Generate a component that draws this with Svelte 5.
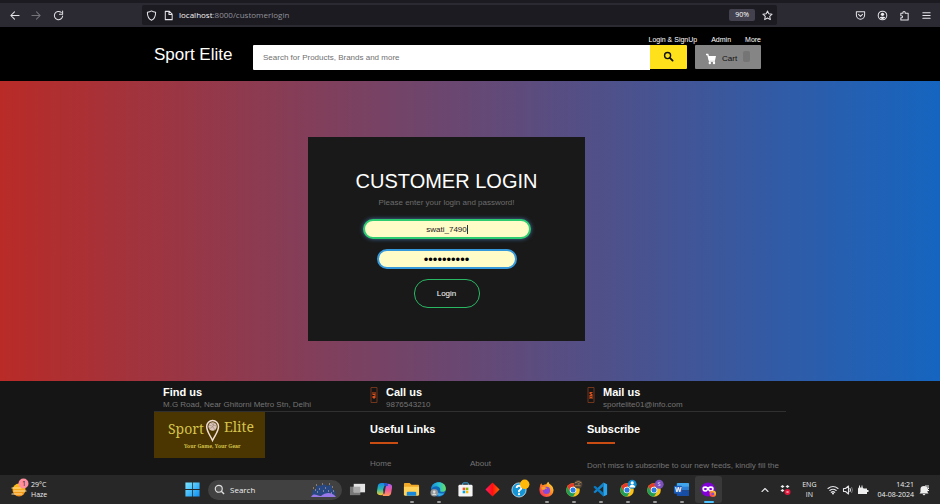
<script>
  let username = $state('swati_7490');
  let password = $state('sportelite');
  let query = $state('');

  const contacts = [
    { title: 'Find us', detail: 'M.G Road, Near Ghitorni Metro Stn, Delhi', glyph: '' },
    { title: 'Call us', detail: '9876543210', glyph: 'M2 5h1v2h1V5h1v4H4V8H2zM2 9h3v2H4v1H3v-1H2z' },
    { title: 'Mail us', detail: 'sportelite01@info.com', glyph: 'M2 5h3v1H4v1h1v2H2V8h1V7H2zM2 9h1v1h1V9h1v3H4v-1H3v1H2z' }
  ];

  const apps = [
    { id: 'tasks', label: 'Task view' },
    { id: 'copilot', label: 'Copilot' },
    { id: 'files', label: 'File Explorer', open: true },
    { id: 'edge', label: 'Edge', open: true },
    { id: 'store', label: 'Store' },
    { id: 'diamond', label: 'Git' },
    { id: 'help', label: 'Get Help' },
    { id: 'firefox', label: 'Firefox', open: true },
    { id: 'chrome', label: 'Chrome', badge: 'photo', open: true },
    { id: 'code', label: 'Visual Studio Code', open: true },
    { id: 'chrome', label: 'Chrome profile 2', badge: 'user', open: true },
    { id: 'chrome', label: 'Chrome profile S', badge: 's', open: true },
    { id: 'word', label: 'Word', open: true },
    { id: 'private', label: 'Firefox Private Browsing', active: true }
  ];
</script>

<svelte:head><title>Sport Elite</title></svelte:head>

<svg class="defs" aria-hidden="true">
  <defs>
    <linearGradient id="win" x2="1" y2="1"><stop stop-color="#7be6ff" /><stop offset="1" stop-color="#0f90f5" /></linearGradient>
    <linearGradient id="co1" x2="0" y2="1"><stop stop-color="#1686e8" /><stop offset=".5" stop-color="#27b8b0" /><stop offset="1" stop-color="#f7c92b" /></linearGradient>
    <linearGradient id="co2" x2="0" y2="1"><stop stop-color="#a55df2" /><stop offset=".5" stop-color="#f0599c" /><stop offset="1" stop-color="#ff9a54" /></linearGradient>
    <linearGradient id="edge1" x2="1" y2="0"><stop stop-color="#1689d8" /><stop offset=".55" stop-color="#2bc4d0" /><stop offset="1" stop-color="#6be058" /></linearGradient>
    <linearGradient id="dia" x2="1" y2="0"><stop stop-color="#ff1c68" /><stop offset=".5" stop-color="#ff1010" /><stop offset="1" stop-color="#ff6a00" /></linearGradient>
    <linearGradient id="fox" x1="1" x2="0" y2="1"><stop stop-color="#fff04a" /><stop offset=".45" stop-color="#ff8b1f" /><stop offset="1" stop-color="#f5156c" /></linearGradient>
    <linearGradient id="sun" x2="0" y2="1"><stop stop-color="#ffc21c" /><stop offset="1" stop-color="#f08a18" /></linearGradient>
  </defs>
</svg>

<div class="screen">
  <div class="browser">
    <div class="nav-tools">
      <button aria-label="Back"><svg viewBox="0 0 12 12"><path d="M11 6H2M6 2 2 6l4 4" class="line" /></svg></button>
      <button aria-label="Forward" class="dim"><svg viewBox="0 0 12 12"><path d="M1 6h9M6 2l4 4-4 4" class="line" /></svg></button>
      <button aria-label="Reload"><svg viewBox="0 0 12 12"><path d="M10.5 6.5A4.5 4.5 0 1 1 9 2.7M10.5 1v3.6H7" class="line" /></svg></button>
    </div>
    <div class="address">
      <svg viewBox="0 0 12 12"><path d="M6 1c1.5 1 3 1.3 4.5 1.4C10.5 7 9.500 9.500 6 11.200 2.500 9.500 1.500 7 1.500 2.400 3 2.300 4.500 2 6 1z" class="line" /></svg>
      <svg viewBox="0 0 12 12" class="doc"><path d="M2.500 1.500h4.500l3 3v6h-7.500zM6.500 1.500v3.300H10" class="line" /></svg>
      <span class="url"><b>localhost</b>:8000/customerlogin</span>
      <span class="zoom">90%</span>
      <button aria-label="Bookmark"><svg viewBox="0 0 12 12"><path d="m6 1 1.500 3.200 3.500.4-2.600 2.400.7 3.500L6 8.800l-3.100 1.700.7-3.500L1 4.600l3.500-.4z" class="line" /></svg></button>
    </div>
    <div class="extras">
      <button aria-label="Pocket"><svg viewBox="0 0 12 12"><path d="M1.500 2h9v3.500a4.500 4.500 0 0 1-9 0zM3.800 4.800 6 7l2.200-2.200" class="line" /></svg></button>
      <button aria-label="Account"><svg viewBox="0 0 12 12"><circle cx="6" cy="6" r="4.700" class="line" /><circle cx="6" cy="4.700" r="1.800" fill="#eee" /><path d="M3 8.500C3 7 9 7 9 8.500L6 10z" fill="#eee" /></svg></button>
      <button aria-label="Extensions"><svg viewBox="0 0 12 12"><path d="M2 3.500h2.300C3.800 1 7.200 1 6.700 3.500H10V11H2V8.500c2.500.5 2.500-2.700 0-2.200z" class="line" /></svg></button>
      <button aria-label="Menu"><svg viewBox="0 0 12 12"><path d="M2 3h8M2 6h8M2 9h8" class="line" /></svg></button>
    </div>
  </div>

  <header>
    <div class="container head">
      <a href="#home" class="brand">Sport Elite</a>
      <div class="head-main">
        <nav><a href="#login">Login &amp; SignUp</a><a href="#admin">Admin</a><a href="#more">More</a></nav>
        <div class="tools">
          <form class="search" onsubmit={(e) => e.preventDefault()}>
            <input type="text" aria-label="Search" placeholder="Search for Products, Brands and more" bind:value={query} />
            <button aria-label="Search products"><svg viewBox="0 0 12 12"><circle cx="5" cy="5" r="3.300" fill="none" stroke="#111" stroke-width="1.500" /><path d="m7.500 7.500 3 3" stroke="#111" stroke-width="2" stroke-linecap="round" /></svg></button>
          </form>
          <button class="cart">
            <svg viewBox="0 0 12 12"><path d="M1 1.500h1.800L4.500 8H10" fill="none" stroke="#fff" stroke-width="1.300" /><path d="M3 3h8l-1 4.500H4z" fill="#fff" /><circle cx="4.800" cy="10" r="1.200" fill="#fff" /><circle cx="9" cy="10" r="1.200" fill="#fff" /></svg>
            Cart <span></span>
          </button>
        </div>
      </div>
    </div>
  </header>

  <main>
    <div class="container">
      <form class="card" onsubmit={(e) => e.preventDefault()}>
        <h1>CUSTOMER LOGIN</h1>
        <p>Please enter your login and password!</p>
        <div class="field">
          <input class="user" type="text" aria-label="Username" bind:value={username} />
          <span class="caret"></span>
        </div>
        <input class="pass" type="password" aria-label="Password" bind:value={password} />
        <button>Login</button>
      </form>
    </div>
  </main>

  <footer>
    <div class="container">
      <div class="columns contacts">
        {#each contacts as c}
          <div class="contact">
            {#if c.glyph}
              <svg viewBox="0 0 7 16" aria-hidden="true"><path d="M.5.5h6v15h-6z" fill="none" stroke="#71351c" /><path d={c.glyph} fill="#d9501b" /></svg>
            {/if}
            <div><h2>{c.title}</h2><span>{c.detail}</span></div>
          </div>
        {/each}
      </div>
      <div class="columns">
        <div>
          <a href="#home" class="logo" aria-label="Sport Elite home">
            <svg viewBox="0 0 111 46">
              <text x="14" y="22" font-size="14">Sport</text>
              <text x="70" y="20" font-size="14">Elite</text>
              <text x="30" y="36" font-size="5" font-weight="bold">Your Game, Your Gear</text>
              <path d="M58.500 28.500C56 23 52.700 19.500 52.700 14.500a5.900 5.900 0 0 1 11.800 0c0 5-3.500 8.500-6 14z" fill="#4b3500" stroke="#f1dfd3" stroke-width="1.500" />
              <circle cx="58.600" cy="14.500" r="4.200" fill="#dcc7ba" />
              <path d="M55 13q4 0 6 5M57 10.500q1 3 5.500 3.500M55 16q4 1 5-5" fill="none" stroke="#8d7466" stroke-width=".5" />
            </svg>
          </a>
        </div>
        <div class="widget">
          <h2>Useful Links</h2>
          <div class="links"><a href="#home">Home</a><a href="#about">About</a></div>
        </div>
        <div class="widget">
          <h2>Subscribe</h2>
          <p>Don't miss to subscribe to our new feeds, kindly fill the</p>
        </div>
      </div>
    </div>
  </footer>

  <div class="taskbar">
    <div class="weather">
      <svg viewBox="0 0 18 20"><circle cx="8" cy="12" r="6.500" fill="url(#sun)" /><path d="M1 10h9M3 13h12M1 16h10" stroke="#ffe2a0" stroke-width="1.200" stroke-linecap="round" /><circle cx="12.500" cy="5.500" r="5" fill="#ff8f9f" /><text x="11" y="8" font-size="7" fill="#222">1</text></svg>
      <div>29°C<span>Haze</span></div>
    </div>
    <button class="app" aria-label="Start"><svg viewBox="0 0 18 18"><path d="M1.500 1.500h7.100v7.100H1.500zM9.400 1.500h7.100v7.100H9.400zM1.500 9.400h7.100v7.100H1.500zM9.400 9.400h7.100v7.100H9.400z" fill="url(#win)" /></svg></button>
    <button class="find">
      <svg class="lens" viewBox="0 0 12 12"><circle cx="5.200" cy="5.200" r="3.800" fill="#555" stroke="#ddd" stroke-width="1.300" /><path d="m8 8 3 3" stroke="#ddd" stroke-width="1.500" /></svg>
      Search
      <svg class="scene" viewBox="0 0 25 16"><path d="M1 13 2 8l3-1 1-4 4 1 3-2 3 2 4-1 1 4 3 2v5z" fill="#244a91" opacity=".85" /><path d="M0 15c3-5 6-1 10-1 4-3 10-5 15 1z" fill="#9678e8" /><path d="M2 6h1M5 3h1M8 7h1M11 2h1M14 6h1M18 2h1M21 5h1M6 10h1M12 9h1M17 9h1M22 9h1M4 8h1M20 11h1" stroke="#d8b6a5" /></svg>
    </button>
    {#each apps as app}
      <button class="app" class:active={app.active} class:open={app.open} aria-label={app.label}>
        <svg viewBox="0 0 18 18">
          {#if app.id === 'tasks'}
            <path d="M1 6h11v9H1z" fill="#777" /><path d="M5 3h12v9H5z" fill="#e4e4e4" /><path d="M5 6h7v6H5z" fill="#aaa" />
          {:else if app.id === 'copilot'}
            <path d="M6 2h5L8 13q-.5 2-2.500 2-5 0-4.500-4l1-6q.6-3 4-3z" fill="url(#co1)" /><path d="M12 16H7l3-11q.5-2 2.500-2 5 0 4.500 4l-1 6q-.6 3-4 3z" fill="url(#co2)" /><path d="M8 2h3q1.500 0 2 3-2.500-.5-3 1.500z" fill="#2358c8" /><path d="m7.500 9 1.500-4h1.500L9 13.500H8z" fill="#303044" />
          {:else if app.id === 'files'}
            <path d="M1 3q0-1 1-1h5l2 2h7q1 0 1 1v10H1z" fill="#f0a928" /><path d="M1 6h16v8q0 1.500-1.500 1.500h-13Q1 15.500 1 14z" fill="#ffd35b" /><path d="M4 15.500v-3q0-1 1-1h8q1 0 1 1v3z" fill="#1687d9" />
          {:else if app.id === 'edge'}
            <circle cx="9" cy="9" r="7.800" fill="#1268b8" /><path d="M1.200 9C1-.5 16.800-1.500 16.800 8.500q0 3-4 3-2.500 0-2-2Q11 6 7 5.500 3 5.500 1.200 9z" fill="url(#edge1)" /><path d="M7 9q0 5 8 4-2 3-5 3-5-1-3-7z" fill="#35acea" /><circle cx="4.500" cy="12.500" r="4" fill="#8f9499" /><circle cx="4.500" cy="11.500" r="1.400" fill="#ddd" /><path d="M2 14.700q2.500-3 5 0z" fill="#ddd" />
          {:else if app.id === 'store'}
            <path d="M6 5V3q0-1 1-1h4q1 0 1 1v2" fill="none" stroke="#3ab5ef" /><rect x="1.500" y="4" width="15" height="12.500" rx="1.500" fill="#f4f4f4" /><path d="M6 7h2.700v2.700H6z" fill="#f25022" /><path d="M9.300 7H12v2.700H9.300z" fill="#7fba00" /><path d="M6 10.300h2.700V13H6z" fill="#00a4ef" /><path d="M9.300 10.300H12V13H9.300z" fill="#ffb900" />
          {:else if app.id === 'diamond'}
            <path d="m9 1.500 7.500 7.500-7.500 7.500L1.500 9z" fill="url(#dia)" />
          {:else if app.id === 'help'}
            <circle cx="8.500" cy="9.500" r="7.500" fill="#1595d5" stroke="#d6eef9" stroke-width=".8" /><path d="M6 7.500Q6 5 8.500 5T11 7.500q0 1.500-2.500 2.800V12" fill="none" stroke="#fff" stroke-width="2" /><circle cx="8.500" cy="14" r="1.200" fill="#fff" /><circle cx="14.500" cy="3.500" r="5" fill="#ffba09" />
          {:else if app.id === 'firefox'}
            <path d="M2 6q0-2 1.500-3.500.5 1.500 1.500 2 2-1 4-1Q9 2 11 .8q.5 2.200 3 3.700 2.500 2 2.500 5a7.300 7.300 0 0 1-15 0q0-2 .5-3.500z" fill="url(#fox)" /><circle cx="9" cy="10" r="3.800" fill="#8848d8" /><path d="M3.500 6.500Q7 5.500 10 8 7 8 6.500 9.500L4 9z" fill="#ff9e27" />
          {:else if app.id === 'chrome'}
            <circle cx="8.500" cy="9.500" r="7.200" fill="#fbc116" /><path d="M2.300 5.900a7.200 7.200 0 0 1 12.500 0H8.500L5.400 11.300z" fill="#e33b2e" /><path d="M2.300 5.900a7.200 7.200 0 0 0 6.200 10.800l3.100-5.400H5.400z" fill="#229d54" /><circle cx="8.500" cy="9.500" r="3.500" fill="#fff" /><circle cx="8.500" cy="9.500" r="2.700" fill="#287de8" />
            {#if app.badge === 'photo'}
              <circle cx="14" cy="3.500" r="4.500" fill="#4a4037" /><path d="M10.500 2q4-3 7 0M10.500 5h6" stroke="#ad8858" fill="none" /><circle cx="14.500" cy="3" r="1.200" fill="#806b52" />
            {:else if app.badge === 'user'}
              <circle cx="14" cy="3.500" r="4.700" fill="#118cd0" /><circle cx="14" cy="2" r="1.700" fill="#fff" /><path d="M11 7q0-3 3-3t3 3z" fill="#fff" />
            {:else}
              <circle cx="14" cy="3.500" r="4.700" fill="#7950bd" /><text x="12.300" y="5.800" font-size="6" fill="#e9ddff">S</text>
            {/if}
          {:else if app.id === 'code'}
            <path d="m12 1.500 4 2v11l-4 2z" fill="#28a5ef" /><path d="M12 1.500v4L4.500 12 3 13l-1.500-1.300L3 10z" fill="#1284cc" /><path d="M12 16.500v-4L4.500 6 3 5 1.500 6.300 3 8z" fill="#087bc4" />
          {:else if app.id === 'word'}
            <path d="M5 2h11q1 0 1 1v4H4V3q0-1 1-1z" fill="#41a5ee" /><path d="M4 6h13v4H4z" fill="#2b7cd3" /><path d="M4 10h13v5q0 1-1 1H5q-1 0-1-1z" fill="#174da5" /><rect x="1" y="5" width="8.500" height="8.500" rx="1" fill="#1959b7" /><text x="2" y="11.500" font-size="7" font-weight="bold" fill="#fff">W</text>
          {:else}
            <circle cx="8.500" cy="9" r="7.500" fill="#8000d7" /><path d="M2.500 8q0-2.500 3-2.500 2 0 3 1 1-1 3-1 3 0 3 2.500 0 3.500-3 3.500-2 0-3-2-1 2-3 2-3 0-3-3.500z" fill="#fff" /><ellipse cx="5.700" cy="8.600" rx="1.600" ry="1.100" fill="#8000d7" /><ellipse cx="11.300" cy="8.600" rx="1.600" ry="1.100" fill="#8000d7" /><circle cx="13.500" cy="13.500" r="3.500" fill="url(#fox)" /><circle cx="13.500" cy="13.700" r="1.500" fill="#8848d8" />
          {/if}
        </svg>
      </button>
    {/each}
    <div class="tray">
      <svg viewBox="0 0 12 12"><path d="m3 7.500 3-3 3 3" class="line" /></svg>
      <svg viewBox="0 0 12 12" class="dots"><path d="m3.500 1 2 1.500-2 1.500-2-1.500zM8.500 1l2 1.500-2 1.500-2-1.500zM3.500 5l2 1.500-2 1.500-2-1.500z" fill="#eee" /><circle cx="8.500" cy="8" r="3" fill="#e3163c" /><path d="m7.500 7 2 2m0-2-2 2" stroke="#fff" stroke-width=".6" /></svg>
      <div class="lang">ENG<span>IN</span></div>
      <svg viewBox="0 0 12 12" class="wifi"><path d="M1 4.500q5-4 10 0M2.800 6.500q3.200-2.600 6.400 0M4.300 8.300q1.700-1.300 3.400 0" class="line" /><circle cx="6" cy="9.500" r="1" fill="#eee" /></svg>
      <svg viewBox="0 0 12 12"><path d="M1.500 4.500h2L6.500 2v8L3.500 7.500h-2zM8 4.500q1 1.500 0 3" class="line" /><path d="M9.500 3q2 3 0 6" stroke="#777" fill="none" /></svg>
      <svg viewBox="0 0 12 12"><path d="M1 4.500h9v1.500h1.500v2H10V10H1z" fill="#eee" /><path d="M2.500 1.500v2.500M5 1.500v2.500M1.500 4h4.500q0 3-2.300 3Z" stroke="#eee" fill="#eee" /></svg>
      <div class="clock">14:21<span>04-08-2024</span></div>
      <svg viewBox="0 0 12 12"><path d="M2.500 8V5q0-3 3.500-3t3.500 3v3l1 1.500h-9zM4.500 10h3L6 11.500z" fill="#eee" /><path d="M7 2h4M8 4h3L8.500 6.500H11" stroke="#eee" stroke-width="1" fill="none" /></svg>
    </div>
  </div>
</div>

<style>
  :global(body) { margin: 0; background: #151515; }
  * { box-sizing: border-box; }
  .screen { height: 100vh; display: flex; flex-direction: column; overflow: hidden; font-family: "Liberation Sans", Arial, sans-serif; font-size: 8px; line-height: 12px; color: #fff; }
  .defs { position: absolute; width: 0; height: 0; }
  button, input { font: inherit; color: inherit; margin: 0; padding: 0; border: 0; background: none; }
  a { color: inherit; text-decoration: none; }
  h1, h2, p { margin: 0; }
  svg { display: block; flex: none; width: 12px; height: 12px; }
  .line { fill: none; stroke: #e4e4e8; stroke-width: 1.100; stroke-linecap: round; stroke-linejoin: round; }
  .container { width: 100%; max-width: 632px; margin: 0 auto; }

  .browser { flex: none; height: 27px; display: flex; align-items: center; padding: 0 8px 0 9px; border-top: 3px solid #1c1b22; background: #2b2a33; font-family: "Open Sans", "Noto Sans", sans-serif; }
  .browser svg { width: 11px; height: 11px; }
  .nav-tools { display: flex; gap: 11px; width: 133px; }
  .dim { opacity: .4; }
  .address { flex: 0 1 635px; height: 20px; margin-right: auto; padding: 0 4px; display: flex; align-items: center; border-radius: 2px; background: #1c1b22; }
  .address .doc { margin: 0 5px 0 6px; }
  .url { color: #93929a; }
  .url b { font-weight: 400; color: #f4f4f6; }
  .zoom { margin: 0 7px 0 auto; padding: 0 6px; border-radius: 2px; background: #42414d; font-size: 7px; }
  .extras { display: flex; gap: 11px; }

  header { flex: none; background: #000; padding: 7px 0 11px; }
  .head { display: flex; }
  .brand { flex: none; width: 99px; padding-top: 11px; font-size: 17px; line-height: 20px; }
  .head-main { flex: 0 1 508px; }
  nav { display: flex; justify-content: flex-end; gap: 14px; font-size: 7px; line-height: 11px; }
  .tools { display: flex; gap: 8px; height: 25px; }
  .search { flex: 1; display: flex; }
  .search input { flex: 1; min-width: 0; padding: 0 10px; background: #fff; color: #222; border-radius: 1px 0 0 1px; outline: 0; }
  .search input::placeholder { color: #707070; opacity: 1; }
  .search button { width: 37px; height: 24px; display: grid; place-items: center; background: #ffe11b; border-radius: 0 1px 1px 0; }
  .search svg { width: 11px; height: 11px; margin-bottom: 2px; }
  .cart { width: 66px; height: 24px; padding: 4px 10px 0; display: flex; align-items: center; gap: 5px; background: #858585; color: #111; border-radius: 1px; }
  .cart span { width: 7px; height: 11px; margin: 0 0 6px 1px; border-radius: 2px; background: #757575; }

  main { flex: none; padding: 56px 0 40px; background: linear-gradient(to right, #b92b27, #1565c0); }
  .card { width: 277px; margin-left: 154px; padding: 30px 40px 33px; display: flex; flex-direction: column; align-items: center; background: #191919; }
  h1 { font-size: 20px; line-height: 28px; font-weight: 400; }
  .card p { margin-bottom: 8px; line-height: 16px; color: #6c6c6c; }
  .card input { height: 20px; border: 2px solid #3498db; border-radius: 10px; background: #fffcc8; color: #222; text-align: center; outline: 0; }
  .field { position: relative; margin-bottom: 10px; }
  .card .user { width: 168px; border-color: #2ecc71; box-shadow: 0 0 4px #4573a5; display: block; }
  .caret { position: absolute; left: calc(50% + 20px); top: 6px; width: 1px; height: 9px; background: #333; }
  .card .pass { width: 140px; margin-bottom: 10px; font-size: 13px; color: #000; }
  .card button { width: 66px; height: 29px; border: 1px solid #2ab764; border-radius: 14px; }

  footer { flex: 1 1 0; min-height: 0; overflow: hidden; background: #151515; color: #747474; }
  .columns { display: grid; grid-template-columns: 216fr 217fr 199fr; }
  .contacts { height: 31px; padding-top: 5px; border-bottom: 1px solid #303030; }
  .contact { display: flex; gap: 8px; padding-top: 1px; }
  .contact:first-child { padding-left: 9px; }
  .contact svg { width: 8px; height: 16px; }
  h2 { font-size: 11px; line-height: 12px; font-weight: 700; color: #fff; }
  .contact h2 { line-height: 13px; margin-top: -1px; }
  .contact span { display: block; }
  .logo { display: block; width: 111px; background: #4b3500; }
  .logo svg { width: 111px; height: 46px; }
  .logo text { font-family: "Noto Serif", "DejaVu Serif", "Liberation Serif", serif; fill: #d4c34c; }
  .widget { padding-top: 11px; }
  .widget h2::after { content: ""; display: block; width: 28px; height: 2px; margin-top: 7px; background: #c94d12; }
  .links { display: grid; grid-template-columns: 100px 1fr; margin-top: 14px; }
  .widget p { margin-top: 16px; white-space: nowrap; }

  .taskbar { flex: none; height: 29px; display: flex; align-items: center; background: #272727; color: #eee; font-family: "Open Sans", "Noto Sans", sans-serif; font-size: 7px; line-height: 10px; }
  .taskbar span { display: block; }
  .weather { width: 179px; padding-left: 11px; display: flex; align-items: center; gap: 2px; }
  .weather svg { width: 18px; height: 20px; margin-bottom: 3px; }
  .app { flex: none; width: 27px; height: 27px; position: relative; display: grid; place-items: center; border-radius: 3px; }
  .app svg { width: 17px; height: 17px; overflow: visible; }
  .app.open::after, .app.active::after { content: ""; position: absolute; bottom: 0; width: 4px; height: 2px; border-radius: 1px; background: #999; }
  .app.active { background: #393939; }
  .app.active::after { width: 10px; background: #4cc2ff; }
  .find { width: 134px; height: 20px; margin: 0 2px; padding: 0 6px; display: flex; align-items: center; gap: 5px; border-radius: 10px; background: #414141; font-size: 8px; }
  .find .lens { width: 11px; height: 11px; }
  .find .scene { width: 25px; height: 16px; margin-left: auto; }
  .tray { margin-left: auto; padding-right: 10px; display: flex; align-items: center; gap: 3px; }
  .tray .dots { margin: 0 8px 0 5px; }
  .tray .wifi { margin-left: 8px; }
  .lang { text-align: center; }
  .clock { margin: 0 1px 0 5px; text-align: right; }
</style>
